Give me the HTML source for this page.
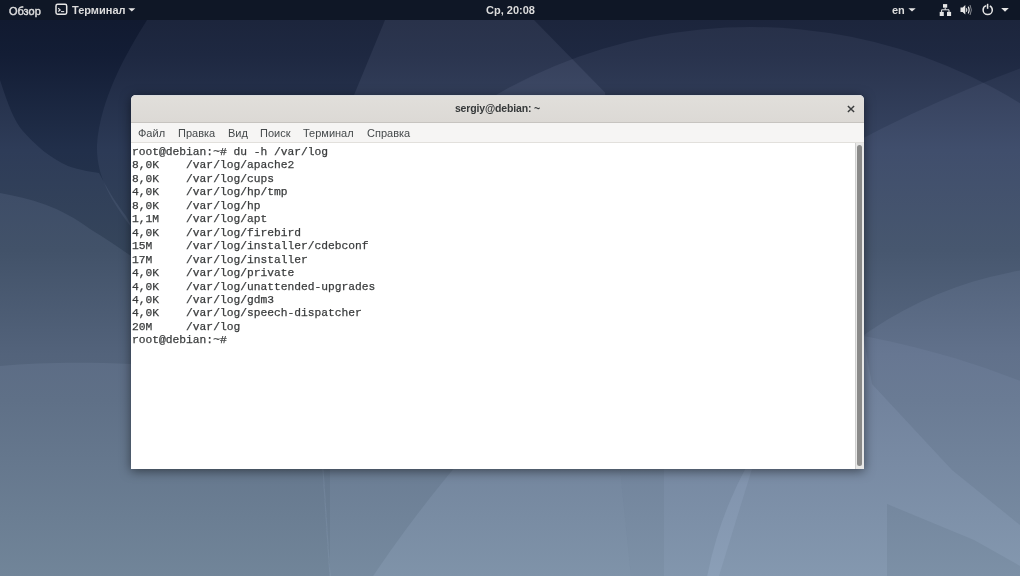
<!DOCTYPE html>
<html><head><meta charset="utf-8">
<style>
*{margin:0;padding:0;box-sizing:border-box}
html,body{width:1020px;height:576px;overflow:hidden}
#top,#win{will-change:transform}
body{position:relative;font-family:"Liberation Sans",sans-serif;
background:linear-gradient(to bottom,#111a30 0%,#1f2c47 26%,#3e4d66 45%,#5f7088 70%,#72869e 100%);}
#bg{position:absolute;left:0;top:0;width:1020px;height:576px}
@supports not (mix-blend-mode:plus-lighter){#ov path,#ov circle{fill:#c8d4ea!important;fill-opacity:0.06}#ov path[fill=none]{fill:none!important;stroke:#c8d4ea;stroke-opacity:0.06}}
#top{position:absolute;left:0;top:0;width:1020px;height:20px;background:#0f1726;color:#dcdcdc;font-size:11px}
.t{position:absolute;top:4.5px;white-space:nowrap;-webkit-text-stroke:0.45px #dcdcdc}
.b{font-weight:bold;-webkit-text-stroke:0;top:4px}
#win{position:absolute;left:131px;top:95px;width:733px;height:374px;background:#fff;border-radius:5px 5px 0 0;
box-shadow:0 2px 11px rgba(0,0,0,0.5)}
#hdr{position:absolute;left:0;top:0;width:733px;height:28px;background:linear-gradient(#e1dfdb,#dcd9d5);border-radius:5px 5px 0 0;border-bottom:1px solid #c7c4c0;box-shadow:inset 0 1px 0 #d9dbde}
#title{position:absolute;left:0px;top:6.5px;letter-spacing:-0.15px;width:733px;text-align:center;font-size:10.5px;font-weight:bold;color:#353839}
#close{position:absolute;left:713.5px;top:7.7px;width:12px;height:12px}
#menu{position:absolute;left:0;top:28px;width:733px;height:20px;background:#f6f5f4;border-bottom:1px solid #e2e0dc;font-size:11px;color:#45494b}
.m{position:absolute;top:3.7px}
#term{position:absolute;left:1px;top:51px;width:724px;height:326px;font-family:"Liberation Mono",monospace;font-size:11.28px;line-height:13.45px;color:#3a3c3d;white-space:pre;-webkit-text-stroke:0.25px #3a3c3d}
#sb{position:absolute;left:724px;top:48px;width:9px;height:326px;background:#e8e8e7;border-left:1px solid #d0d0d0}
#sl{position:absolute;left:1px;top:2px;width:5px;height:321px;background:#8a8a89;border-radius:3px}
</style></head><body>
<svg id="bg" width="1020" height="576" viewBox="0 0 1020 576">
<defs>
<linearGradient id="g" x1="0" y1="0" x2="0" y2="576" gradientUnits="userSpaceOnUse">
<stop offset="0.035" stop-color="#111a30"/>
<stop offset="0.095" stop-color="#131d35"/>
<stop offset="0.26" stop-color="#212f4a"/>
<stop offset="0.434" stop-color="#28384d"/>
<stop offset="0.616" stop-color="#39495f"/>
<stop offset="0.694" stop-color="#3c4d61"/>
<stop offset="1" stop-color="#4e6273"/>
</linearGradient>
<clipPath id="cf"><path d="M330,300 H1020 V576 H330 Z"/></clipPath>
<clipPath id="cc"><path d="M0,0 H1020 V576 H330 L323,469 L131,469 L0,300 Z"/></clipPath>
</defs>
<rect width="1020" height="576" fill="url(#g)"/>
<g id="ov" fill="#0d0d0e" style="mix-blend-mode:plus-lighter">
<path style="mix-blend-mode:plus-lighter" d="M0,80 C8,105 15,122 22,130 C35,145 50,158 68,166 C80,170 92,172 99,173 C103,180 110,195 126,216 L131,225 L200,300 L323,469 L330,576 L0,576 Z"/>
<path style="mix-blend-mode:plus-lighter" d="M0,193 C15,196 30,199 45,204.5 C60,210 75,218 90,229 C105,238 118,247 131,256 L323,469 L330,576 L0,576 Z"/>
<path style="mix-blend-mode:plus-lighter" fill="#09090a" d="M0,366 C40,362 90,362 131,364 L131,469 L323,469 L330,576 L0,576 Z"/>
<path style="mix-blend-mode:plus-lighter" fill="#0b0b0c" d="M147,20 C125,55 100,100 97,145 C96,175 110,200 135,232 L323,469 L330,576 L1020,576 L1020,20 Z"/>
<path style="mix-blend-mode:plus-lighter" d="M385,20 L354,95 L354,469 L640,469 L605,92.5 L534,20 Z"/>
<circle style="mix-blend-mode:plus-lighter" fill="#0b0b0c" cx="751" cy="540" r="513" clip-path="url(#cc)"/>
<circle style="mix-blend-mode:plus-lighter" fill="#09090a" cx="1483" cy="1325" r="1339"/>
<circle style="mix-blend-mode:plus-lighter" fill="#09090a" cx="1085" cy="650" r="385"/>
<path style="mix-blend-mode:plus-lighter" fill="none" stroke="#0a0a0b" stroke-width="1.2" d="M323,469 L330,576"/>
<circle style="mix-blend-mode:plus-lighter" fill="#060607" cx="700" cy="1200" r="879.5" clip-path="url(#cf)"/>
<path style="mix-blend-mode:plus-lighter" fill="#0c0c0d" d="M323,300 L323,469 L330,576 L631,576 L620,469 L620,300 Z"/>
<path style="mix-blend-mode:plus-lighter" fill="#0a0a0b" d="M620,300 L620,469 L631,576 L664,576 L664,300 Z"/>
<path style="mix-blend-mode:plus-lighter" fill="#080809" d="M864,340 L872,384 L952,470 L1020,525 L1020,566 L974,540 L887,504 L887,576 L664,576 L664,469 L864,469 Z"/>
<path style="mix-blend-mode:plus-lighter" fill="#070708" d="M664,300 L664,576 L719,576 L752,469 L752,300 Z"/>
</g>
</svg>
<div id="top">
  <span class="t" style="left:9px">Обзор</span>
  <svg style="position:absolute;left:0;top:0" width="1020" height="20" viewBox="0 0 1020 20">
    <g fill="none" stroke="#e6e6e6">
      <rect x="56" y="4.3" width="10.7" height="9.9" rx="1.6" stroke-width="1.5"/>
      <path d="M58.2,8.3 L60.2,9.9 L58.2,11.5" stroke-width="1.1"/>
      <path d="M61,11.6 H64.2" stroke-width="1"/>
      <circle cx="987.7" cy="10" r="4.6" stroke-width="1.5" stroke-dasharray="24.5 4.4" stroke-dashoffset="-2.2" transform="rotate(-90 987.7 10)"/>
      <path d="M987.6,3.8 V8.8" stroke-width="1.5"/>
      <path d="M945.2,7.5 V9.8 M941.6,12 V9.8 H949 V12" stroke-width="1"/>
    </g>
    <g fill="#e6e6e6">
      <path d="M128.3,8.2 H135.3 L131.8,11.6 Z"/>
      <path d="M908.4,8.2 H915.7 L912,11.6 Z"/>
      <path d="M1001.2,8 H1008.8 L1005,11.8 Z"/>
      <rect x="943" y="4.1" width="4.2" height="3.6"/>
      <rect x="939.7" y="11.9" width="4.1" height="4.1"/>
      <rect x="947" y="11.9" width="4.1" height="4.1"/>
      <path d="M960.5,7.6 H962.6 L965.3,5 V14.6 L962.6,12.1 H960.5 Z"/>
    </g>
    <g fill="none" stroke="#e6e6e6">
      <path d="M966.3,8.3 Q967.4,10 966.3,11.8" stroke-width="1.1"/>
      <path d="M968.2,6.6 Q970.2,10 968.2,13.5" stroke-width="1.1"/>
      <path d="M970,5 Q972.8,10 970,15" stroke-width="1" stroke-opacity="0.55"/>
    </g>
  </svg>
  <span class="t b" style="left:72px">Терминал</span>
  <span class="t b" style="left:486px">Ср, 20:08</span>
  <span class="t b" style="left:892px">en</span>
</div>
<div id="win">
  <div id="hdr"><div id="title">sergiy@debian: ~</div>
  <svg id="close" viewBox="0 0 12 12"><path d="M2.9 2.9L9.1 9.1M9.1 2.9L2.9 9.1" stroke="#3a3c3d" stroke-width="1.45"/></svg></div>
  <div id="menu">
    <span class="m" style="left:7px">Файл</span>
    <span class="m" style="left:47px">Правка</span>
    <span class="m" style="left:97px">Вид</span>
    <span class="m" style="left:129px">Поиск</span>
    <span class="m" style="left:172px">Терминал</span>
    <span class="m" style="left:236px">Справка</span>
  </div>
  <div id="term">root@debian:~# du -h /var/log
8,0K    /var/log/apache2
8,0K    /var/log/cups
4,0K    /var/log/hp/tmp
8,0K    /var/log/hp
1,1M    /var/log/apt
4,0K    /var/log/firebird
15M     /var/log/installer/cdebconf
17M     /var/log/installer
4,0K    /var/log/private
4,0K    /var/log/unattended-upgrades
4,0K    /var/log/gdm3
4,0K    /var/log/speech-dispatcher
20M     /var/log
root@debian:~# </div>
  <div id="sb"><div id="sl"></div></div>
</div>
</body></html>
